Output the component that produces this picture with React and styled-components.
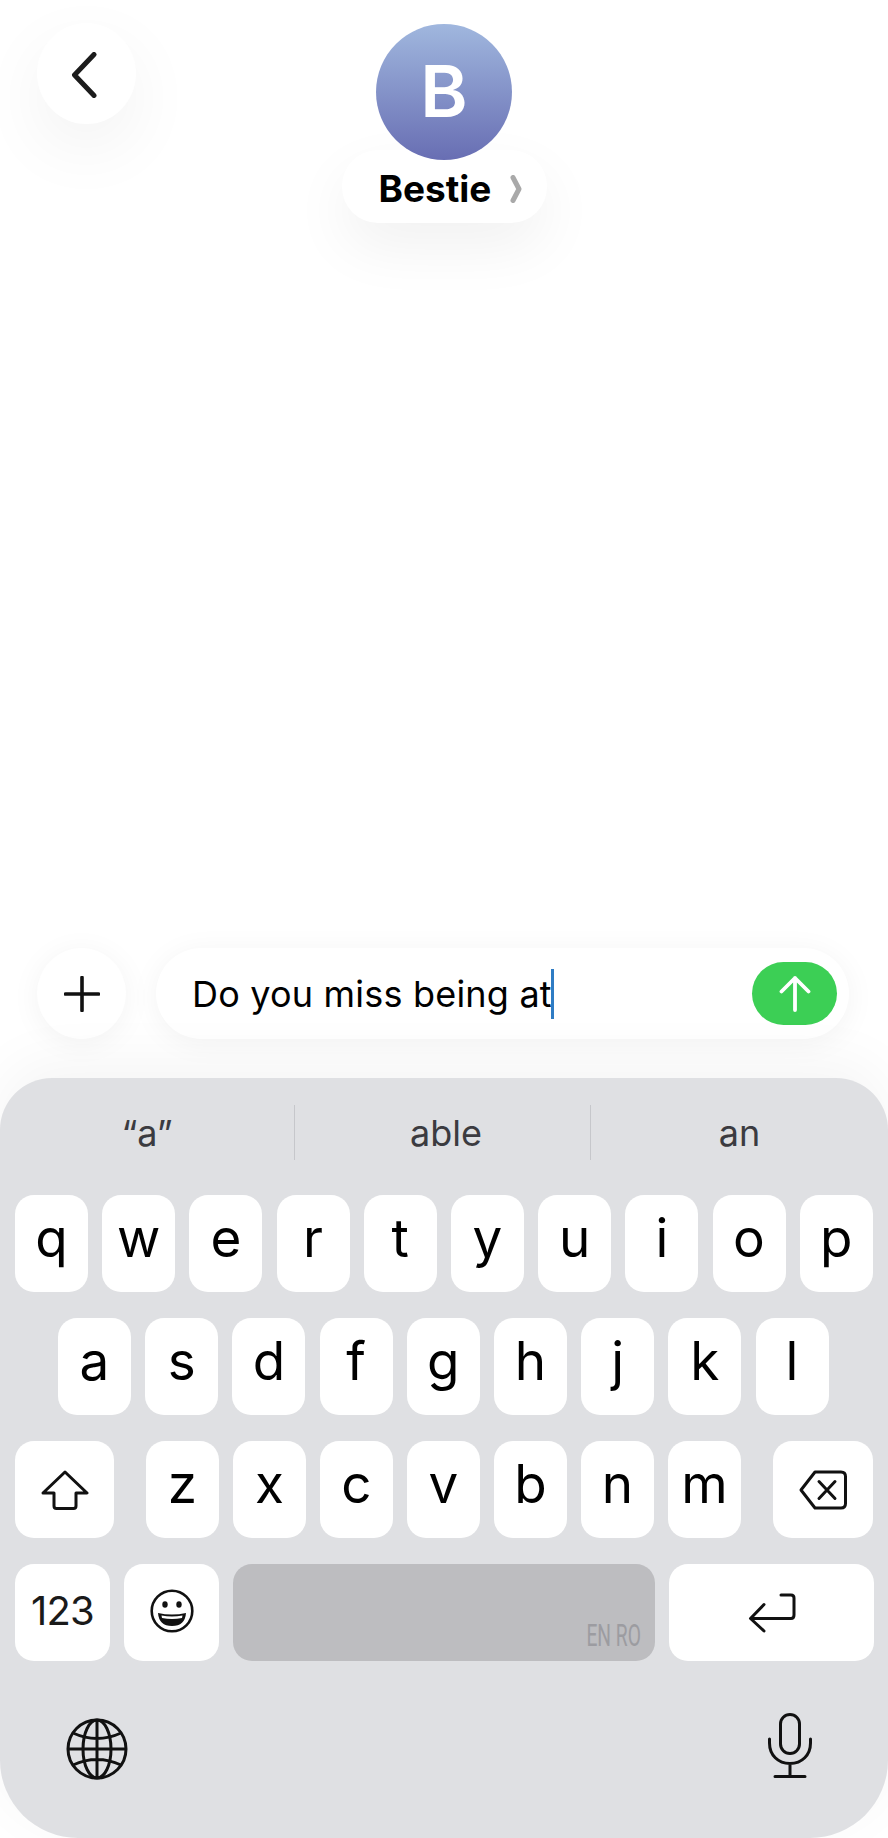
import React from 'react'
import styled, { createGlobalStyle } from 'styled-components'

const Global = createGlobalStyle`
html, body { margin: 0; padding: 0; background: #fff; }
body { font-family: Inter, "Liberation Sans", sans-serif; }
`

const Page = styled.div`
width: 888px;
height: 1838px;
display: flex;
flex-direction: column;
overflow: hidden;
background: #fff;
`

const Header = styled.header`
display: grid;
grid-template-columns: 1fr auto 1fr;
padding: 23px 0 0 37px;
`

const BackButton = styled.div`
width: 99px;
height: 101px;
border-radius: 50%;
background: #fff;
display: flex;
align-items: center;
justify-content: center;
box-shadow: 0 24px 70px rgba(0, 0, 0, .055);
svg { margin-right: 6px; margin-top: 2px; }
`

const Contact = styled.div`
display: flex;
flex-direction: column;
align-items: center;
margin-left: -37px;
padding-top: 1px;
`

const Avatar = styled.div`
position: relative;
z-index: 1;
width: 136px;
height: 136px;
box-sizing: border-box;
padding-bottom: 2px;
border-radius: 50%;
background: linear-gradient(#a0b7de, #686eb3);
display: flex;
align-items: center;
justify-content: center;
color: #fff;
font-size: 72px;
font-weight: 600;
line-height: 1;
`

const NamePill = styled.div`
margin-top: -10px;
width: 205px;
height: 73px;
box-sizing: border-box;
padding: 4px 25px 0 37px;
border-radius: 36px;
background: #fff;
display: flex;
align-items: center;
justify-content: space-between;
box-shadow: 0 24px 60px rgba(0, 0, 0, .06);
`

const Name = styled.span`
font-size: 37px;
font-weight: 700;
color: #000;
`

const Thread = styled.main`
flex: 1;
`

const Composer = styled.div`
display: flex;
gap: 30px;
padding: 0 39px 39px 37px;
`

const PlusButton = styled.div`
flex: none;
width: 89px;
height: 91px;
border-radius: 50%;
background: #fff;
display: flex;
align-items: center;
justify-content: center;
box-shadow: 0 4px 30px rgba(0, 0, 0, .05);
`

const Field = styled.div`
flex: 1;
height: 91px;
box-sizing: border-box;
padding: 0 12px 0 36px;
border-radius: 46px;
background: #fff;
display: flex;
align-items: center;
box-shadow: 0 4px 30px rgba(0, 0, 0, .05);
`

const FieldText = styled.span`
font-size: 36px;
color: #000;
letter-spacing: .2px;
white-space: nowrap;
`

const Caret = styled.span`
width: 3px;
height: 50px;
margin: 0 0 0 -1px;
background: #2f7cc4;
`

const SendButton = styled.div`
margin-left: auto;
width: 85px;
height: 63px;
border-radius: 32px;
background: #3ccf55;
display: flex;
align-items: center;
justify-content: center;
`

const Keyboard = styled.section`
height: 760px;
box-sizing: border-box;
background: #dfe0e3;
border-radius: 52px 52px 78px 78px;
box-shadow: 0 -16px 60px rgba(0, 0, 0, .045);
display: flex;
flex-direction: column;
`

const Suggestions = styled.div`
height: 117px;
display: grid;
grid-template-columns: 294px 296px 298px;
padding-top: 27px;
box-sizing: border-box;
`

const Suggestion = styled.div`
height: 55px;
box-sizing: border-box;
padding-left: ${(p) => p.$nudge || 0}px;
display: flex;
align-items: center;
justify-content: center;
font-size: 36px;
color: #3b3b40;
border-left: ${(p) => (p.$divider ? '1.5px solid #c6c7cb' : 'none')};
`

const Keys = styled.div`
display: flex;
flex-direction: column;
gap: 26px;
padding: 0 14px 0 15px;
`

const Row = styled.div`
display: flex;
gap: ${(p) => p.$gap ?? 14.2}px;
padding-left: ${(p) => p.$inset || 0}px;
`

const Key = styled.div`
flex: none;
width: ${(p) => p.$w || 73}px;
height: 97px;
box-sizing: border-box;
padding-bottom: ${(p) => (p.$icon ? 0 : 10)}px;
border-radius: 19px;
background: #fff;
display: flex;
align-items: center;
justify-content: center;
color: #000;
font-size: 53px;
line-height: 1;
`

const Number = styled.span`
font-size: 40px;
padding-bottom: 3px;
letter-spacing: -.8px;
color: #1a1a1a;
`

const LetterGroup = styled.div`
display: flex;
gap: 14px;
margin: 0 32px;
`

const SmileySlot = styled.div`
padding-bottom: 4px;
svg { display: block; }
`

const SpaceBar = styled.div`
flex: none;
width: 422px;
height: 97px;
box-sizing: border-box;
padding: 0 14px 13px 0;
border-radius: 19px;
background: #bdbdc0;
display: flex;
align-items: flex-end;
justify-content: flex-end;
`

const Languages = styled.span`
display: inline-block;
font-family: Roboto, sans-serif;
font-size: 31px;
line-height: 24px;
color: #9c9ca1;
white-space: nowrap;
transform: scaleX(.62);
transform-origin: right center;
`

const Dock = styled.div`
display: flex;
justify-content: space-between;
padding: 52px 76px 0 66px;
svg { display: block; }
`

const GlobeSlot = styled.div`
padding-top: 5px;
`

const Back = () => (
  <svg width="26" height="46" viewBox="0 0 26 46" fill="none" stroke="#1c1c1c" strokeWidth="5" strokeLinecap="round" strokeLinejoin="round">
    <path d="M23 2.5 L3.5 23 L23 43.5" />
  </svg>
)

const NameChevron = () => (
  <svg width="12" height="28" viewBox="0 0 12 28" fill="none" stroke="#a9a9a9" strokeWidth="5" strokeLinecap="round" strokeLinejoin="round">
    <path d="M3 2.5 L9 14 L3 25.5" />
  </svg>
)

const Plus = () => (
  <svg width="36" height="36" viewBox="0 0 36 36" stroke="#111" strokeWidth="3.6" strokeLinecap="round">
    <path d="M18 1.5 V34.5 M1.5 18 H34.5" />
  </svg>
)

const ArrowUp = () => (
  <svg width="32" height="37" viewBox="0 0 32 37" fill="none" stroke="#fff" strokeWidth="3.8" strokeLinecap="round" strokeLinejoin="round">
    <path d="M16 35 V3 M2.5 16.5 L16 3 L29.5 16.5" />
  </svg>
)

const Shift = () => (
  <svg width="48" height="40" viewBox="0 0 48 40" fill="none" stroke="#111" strokeWidth="3" strokeLinejoin="round">
    <path d="M24 2 L46 23 H35 V36 Q35 38.5 32.5 38.5 H15.5 Q13 38.5 13 36 V23 H2 Z" />
  </svg>
)

const Backspace = () => (
  <svg width="48" height="40" viewBox="0 0 48 40" fill="none" stroke="#111" strokeWidth="3" strokeLinecap="round" strokeLinejoin="round">
    <path d="M16 2 H42 Q46.5 2 46.5 6.5 V33.5 Q46.5 38 42 38 H16 L2 20 Z" />
    <path d="M20 11.5 L36 28.5 M36 11.5 L20 28.5" />
  </svg>
)

const Return = () => (
  <svg width="48" height="40" viewBox="0 0 48 40" fill="none" stroke="#111" strokeWidth="3" strokeLinecap="round" strokeLinejoin="round">
    <path d="M33 2 H43 Q46 2 46 5 V22 Q46 25.5 43 25.5 H3 M16 11.5 L2.5 25.5 L16 38" />
  </svg>
)

const Smiley = () => (
  <svg width="44" height="44" viewBox="0 0 44 44">
    <circle cx="22" cy="22" r="20.3" fill="none" stroke="#111" strokeWidth="2.6" />
    <ellipse cx="15" cy="15.5" rx="2.7" ry="3.3" fill="#111" />
    <ellipse cx="29" cy="15.5" rx="2.7" ry="3.3" fill="#111" />
    <path d="M8 24 Q22 27 36 24 Q35 37 22 37 Q9 37 8 24 Z" fill="#111" />
    <path d="M11.5 26.5 Q22 28.5 32.5 26.5 L32 29 Q22 31 12 29 Z" fill="#fff" />
  </svg>
)

const Globe = () => (
  <svg width="62" height="62" viewBox="0 0 62 62" fill="none" stroke="#111" strokeWidth="3">
    <circle cx="31" cy="31" r="29" />
    <ellipse cx="31" cy="31" rx="14" ry="29" />
    <path d="M31 2 V60 M2 31 H60 M7 15 Q31 26 55 15 M7 47 Q31 36 55 47" />
  </svg>
)

const Mic = () => (
  <svg width="44" height="66" viewBox="0 0 44 66" fill="none" stroke="#111" strokeWidth="3" strokeLinecap="round">
    <rect x="12.5" y="1.5" width="19" height="39" rx="9.5" />
    <path d="M1.5 26 V30 C1.5 42 10 50.5 22 50.5 C34 50.5 42.5 42 42.5 30 V26 M22 50.5 V63.5 M7 63.5 H37" />
  </svg>
)

const App = () => {
  return (
    <Page>
      <Global />
      <Header>
        <BackButton><Back /></BackButton>
        <Contact>
          <Avatar>B</Avatar>
          <NamePill>
            <Name>Bestie</Name>
            <NameChevron />
          </NamePill>
        </Contact>
      </Header>
      <Thread />
      <Composer>
        <PlusButton><Plus /></PlusButton>
        <Field>
          <FieldText>Do you miss being at</FieldText>
          <Caret />
          <SendButton><ArrowUp /></SendButton>
        </Field>
      </Composer>
      <Keyboard>
        <Suggestions>
          <Suggestion>“a”</Suggestion>
          <Suggestion $divider $nudge={7}>able</Suggestion>
          <Suggestion $divider>an</Suggestion>
        </Suggestions>
        <Keys>
          <Row>
            {'qwertyuiop'.split('').map((c) => <Key key={c}>{c}</Key>)}
          </Row>
          <Row $inset={43}>
            {'asdfghjkl'.split('').map((c) => <Key key={c}>{c}</Key>)}
          </Row>
          <Row $gap={0}>
            <Key $w={99} $icon><Shift /></Key>
            <LetterGroup>
              {'zxcvbnm'.split('').map((c) => <Key key={c}>{c}</Key>)}
            </LetterGroup>
            <Key $w={100} $icon><Backspace /></Key>
          </Row>
          <Row $gap={14}>
            <Key $w={95} $icon><Number>123</Number></Key>
            <Key $w={95} $icon><SmileySlot><Smiley /></SmileySlot></Key>
            <SpaceBar><Languages>EN RO</Languages></SpaceBar>
            <Key $w={205} $icon><Return /></Key>
          </Row>
        </Keys>
        <Dock>
          <GlobeSlot><Globe /></GlobeSlot>
          <Mic />
        </Dock>
      </Keyboard>
    </Page>
  )
}

export default App
